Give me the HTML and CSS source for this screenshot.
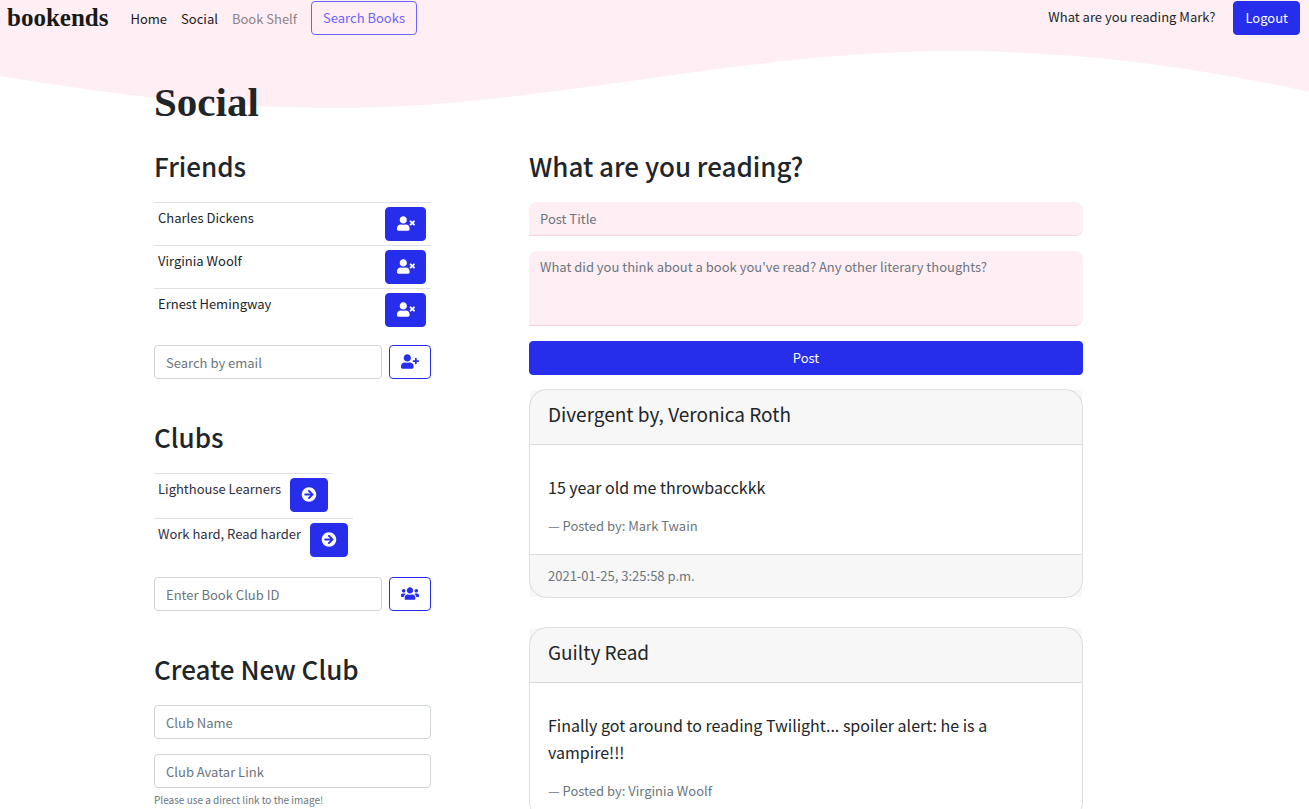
FILE: index.html
```html
<!DOCTYPE html>
<html lang="en">
<head>
<meta charset="utf-8">
<meta name="viewport" content="width=device-width, initial-scale=1">
<title>bookends</title>
<link rel="stylesheet" href="styles.css">
</head>
<body>
<svg class="sprites" aria-hidden="true">
  <symbol id="user-times" viewBox="0 0 640 512"><path d="M589.6 240l45.6-45.6c6.3-6.3 6.3-16.5 0-22.8l-22.8-22.8c-6.3-6.3-16.5-6.3-22.8 0L544 194.4l-45.6-45.6c-6.3-6.3-16.5-6.3-22.8 0l-22.8 22.8c-6.3 6.3-6.3 16.5 0 22.8l45.6 45.6-45.6 45.6c-6.3 6.3-6.3 16.5 0 22.8l22.8 22.8c6.3 6.3 16.5 6.3 22.8 0l45.6-45.6 45.6 45.6c6.3 6.3 16.5 6.3 22.8 0l22.8-22.8c6.3-6.3 6.3-16.5 0-22.8L589.6 240zM224 256c70.7 0 128-57.3 128-128S294.7 0 224 0 96 57.3 96 128s57.3 128 128 128zm89.6 32h-16.7c-22.2 10.2-46.9 16-72.9 16s-50.6-5.8-72.9-16h-16.7C60.2 288 0 348.2 0 422.4V464c0 26.5 21.5 48 48 48h352c26.5 0 48-21.5 48-48v-41.6c0-74.2-60.2-134.4-134.4-134.4z"/></symbol>
  <symbol id="user-plus" viewBox="0 0 640 512"><path d="M624 208h-64v-64c0-8.800-7.200-16-16-16h-32c-8.800 0-16 7.200-16 16v64h-64c-8.800 0-16 7.200-16 16v32c0 8.800 7.200 16 16 16h64v64c0 8.800 7.200 16 16 16h32c8.800 0 16-7.200 16-16v-64h64c8.800 0 16-7.200 16-16v-32c0-8.800-7.200-16-16-16zM224 256c70.7 0 128-57.3 128-128S294.7 0 224 0 96 57.3 96 128s57.3 128 128 128zm89.6 32h-16.7c-22.2 10.2-46.9 16-72.9 16s-50.6-5.8-72.9-16h-16.7C60.2 288 0 348.2 0 422.4V464c0 26.5 21.5 48 48 48h352c26.5 0 48-21.5 48-48v-41.6c0-74.2-60.2-134.4-134.4-134.4z"/></symbol>
  <symbol id="users" viewBox="0 0 640 512"><path d="M96 224c35.3 0 64-28.7 64-64s-28.7-64-64-64-64 28.7-64 64 28.7 64 64 64zm448 0c35.3 0 64-28.7 64-64s-28.7-64-64-64-64 28.7-64 64 28.7 64 64 64zm32 32h-64c-17.6 0-33.5 7.1-45.1 18.6 40.3 22.1 68.9 62 75.1 109.4h66c17.7 0 32-14.3 32-32v-32c0-35.3-28.7-64-64-64zm-256 0c61.9 0 112-50.1 112-112S381.9 32 320 32 208 82.1 208 144s50.1 112 112 112zm76.8 32h-8.3c-20.8 10-43.9 16-68.5 16s-47.6-6-68.5-16h-8.3C179.6 288 128 339.6 128 403.2V432c0 26.5 21.5 48 48 48h288c26.5 0 48-21.5 48-48v-28.800c0-63.6-51.6-115.2-115.2-115.2zm-223.7-13.4C161.5 263.1 145.6 256 128 256H64c-35.3 0-64 28.7-64 64v32c0 17.7 14.3 32 32 32h65.9c6.3-47.4 34.9-87.3 75.2-109.4z"/></symbol>
  <symbol id="arrow-circle" viewBox="0 0 512 512"><path d="M256 8c137 0 248 111 248 248S393 504 256 504 8 393 8 256 119 8 256 8zm-28.9 143.6l75.5 72.4H120c-13.3 0-24 10.7-24 24v16c0 13.3 10.7 24 24 24h182.6l-75.5 72.4c-9.7 9.3-9.9 24.8-.4 34.3l11 10.9c9.4 9.4 24.6 9.4 33.9 0L404.3 273c9.4-9.4 9.4-24.6 0-33.9L271.6 106.3c-9.4-9.4-24.6-9.4-33.9 0l-11 10.900c-9.5 9.6-9.3 25.1.4 34.4z"/></symbol>
</svg>

<svg class="wave" viewBox="0 0 1309 108" preserveAspectRatio="none" aria-hidden="true">
  <path d="M0 0H1309V92C1190 65 1070 51 950 51C740 51 540 108 335 108C220 108 115 95 0 76Z"/>
</svg>

<header class="navbar">
  <a class="brand" href="#">bookends</a>
  <nav class="nav-links">
    <a class="nav-link" href="#">Home</a>
    <a class="nav-link" href="#">Social</a>
    <a class="nav-link muted" href="#">Book Shelf</a>
    <a class="btn btn-search" href="#">Search Books</a>
  </nav>
  <span class="greeting">What are you reading Mark?</span>
  <button class="btn btn-solid" type="button">Logout</button>
</header>

<main class="container">
  <h1 class="page-title">Social</h1>
  <div class="columns">
    <div class="sidebar">
      <section class="section">
        <h2 class="heading">Friends</h2>
        <table class="list list-full">
          <tbody>
            <tr><td>Charles Dickens</td><td class="action"><button class="btn btn-solid btn-icon" type="button" aria-label="Remove Charles Dickens"><svg class="icon"><use href="#user-times"/></svg></button></td></tr>
            <tr><td>Virginia Woolf</td><td class="action"><button class="btn btn-solid btn-icon" type="button" aria-label="Remove Virginia Woolf"><svg class="icon"><use href="#user-times"/></svg></button></td></tr>
            <tr><td>Ernest Hemingway</td><td class="action"><button class="btn btn-solid btn-icon" type="button" aria-label="Remove Ernest Hemingway"><svg class="icon"><use href="#user-times"/></svg></button></td></tr>
          </tbody>
        </table>
        <form class="inline-form">
          <input class="field" type="email" placeholder="Search by email" aria-label="Search by email">
          <button class="btn btn-outline btn-icon" type="button" aria-label="Add friend"><svg class="icon"><use href="#user-plus"/></svg></button>
        </form>
      </section>

      <section class="section">
        <h2 class="heading">Clubs</h2>
        <div class="clubs">
          <table class="list"><tbody><tr><td><a class="club-link" href="#">Lighthouse Learners</a></td><td class="action"><button class="btn btn-solid btn-go" type="button" aria-label="Open Lighthouse Learners"><svg class="icon"><use href="#arrow-circle"/></svg></button></td></tr></tbody></table>
          <table class="list"><tbody><tr><td><a class="club-link" href="#">Work hard, Read harder</a></td><td class="action"><button class="btn btn-solid btn-go" type="button" aria-label="Open Work hard, Read harder"><svg class="icon"><use href="#arrow-circle"/></svg></button></td></tr></tbody></table>
        </div>
        <form class="inline-form">
          <input class="field" type="text" placeholder="Enter Book Club ID" aria-label="Enter Book Club ID">
          <button class="btn btn-outline btn-icon" type="button" aria-label="Join club"><svg class="icon"><use href="#users"/></svg></button>
        </form>
      </section>

      <section class="section">
        <h2 class="heading">Create New Club</h2>
        <form class="stack">
          <input class="field" type="text" placeholder="Club Name" aria-label="Club Name">
          <div>
            <input class="field" type="url" placeholder="Club Avatar Link" aria-label="Club Avatar Link" aria-describedby="avatar-help">
            <small class="help" id="avatar-help">Please use a direct link to the image!</small>
          </div>
        </form>
      </section>
    </div>

    <div class="feed">
      <h2 class="heading">What are you reading?</h2>
      <form class="stack post-form">
        <input class="field field-pink" type="text" placeholder="Post Title" aria-label="Post Title">
        <textarea class="field field-pink area" placeholder="What did you think about a book you've read? Any other literary thoughts?" aria-label="Post content"></textarea>
        <button class="btn btn-solid" type="button">Post</button>
      </form>
      <article class="card">
        <h3 class="card-header">Divergent by, Veronica Roth</h3>
        <blockquote class="card-body">
          <p class="quote">15 year old me throwbacckkk</p>
          <footer class="author">— Posted by: Mark Twain</footer>
        </blockquote>
        <div class="card-footer">2021-01-25, 3:25:58 p.m.</div>
      </article>
      <article class="card">
        <h3 class="card-header">Guilty Read</h3>
        <blockquote class="card-body">
          <p class="quote">Finally got around to reading Twilight... spoiler alert: he is a vampire!!!</p>
          <footer class="author">— Posted by: Virginia Woolf</footer>
        </blockquote>
      </article>
    </div>
  </div>
</main>
</body>
</html>
```
FILE: styles.css
```css
:root {
  --blue: #262eeb;
  --pink: #ffeff4;
  --ink: #212529;
  --grey: #6c757d;
  --sans: "Noto Sans CJK JP", "Noto Sans", sans-serif;
}

* {
  box-sizing: border-box;
}

body {
  position: relative;
  margin: 0;
  background: #fff;
  color: var(--ink);
  font: 13px/21px var(--sans);
}

h1, h2, h3, p, blockquote {
  margin: 0;
}

.sprites {
  position: absolute;
  width: 0;
  height: 0;
}

.wave {
  position: absolute;
  top: 0;
  left: 0;
  z-index: -1;
  width: 100%;
  height: 108px;
  fill: var(--pink);
}

.navbar {
  display: flex;
  align-items: center;
  padding: 1px 9px 1px 7px;
}

.brand {
  margin-right: 22px;
  color: #191919;
  font: bold 25px/34px "Liberation Serif", serif;
  text-decoration: none;
}

.nav-links {
  display: flex;
  align-items: center;
  gap: 14px;
}

.nav-link {
  color: #191919;
  text-decoration: none;
}

.muted {
  color: #8c8388;
}

.greeting {
  margin: 0 18px 4px auto;
}

.btn {
  display: block;
  height: 34px;
  padding: 0 11px;
  border: 1px solid var(--blue);
  border-radius: 4px;
  font: 13px/32px var(--sans);
  text-align: center;
  text-decoration: none;
  cursor: pointer;
}

.btn-solid {
  background: var(--blue);
  color: #fff;
}

.btn-outline {
  background: #fff;
  color: var(--blue);
}

.btn-search {
  border-color: #6c63ff;
  color: #6c63ff;
}

.btn-icon, .btn-go {
  display: flex;
  align-items: center;
  justify-content: center;
  padding: 0 0 2px;
}

.btn-icon {
  width: 41px;
}

.btn-go {
  width: 38px;
}

.icon {
  width: 18px;
  height: 15px;
  fill: currentColor;
}

.container {
  max-width: 1001px;
  margin: 0 auto;
  padding: 42px 72px 30px 0;
}

.page-title {
  font: bold 41px/48px "Liberation Serif", serif;
}

.columns {
  display: grid;
  grid-template-columns: minmax(0, 1fr) minmax(0, 2fr);
  gap: 98px;
  padding-top: 22px;
}

.heading {
  margin-bottom: 18px;
  font-size: 26px;
  font-weight: 500;
  line-height: 36px;
}

.section {
  margin-bottom: 40px;
}

.list {
  border-collapse: collapse;
}

.list-full {
  width: 100%;
}

.list td {
  padding: 4px;
  border-top: 1px solid #dee2e6;
  vertical-align: top;
}

.list .action {
  width: 46px;
  padding-left: 5px;
  padding-right: 5px;
}

.clubs {
  display: grid;
  justify-items: start;
  gap: 2px;
  padding-bottom: 2px;
}

.club-link {
  color: #2f2e41;
  text-decoration: none;
}

.inline-form {
  display: flex;
  gap: 7px;
  margin-top: 14px;
}

.inline-form .btn {
  flex: none;
  width: 42px;
}

.field {
  display: block;
  width: 100%;
  height: 34px;
  padding: 0 11px;
  border: 1px solid #ced4da;
  border-radius: 4px;
  background: #fff;
  color: var(--ink);
  font: 13px/21px var(--sans);
}

.field::placeholder {
  color: var(--grey);
  opacity: 1;
}

.stack {
  display: grid;
  gap: 15px;
}

.help {
  display: block;
  margin-top: 3px;
  color: var(--grey);
  font-size: 10px;
  line-height: 18px;
}

.field-pink {
  border-width: 0 0 1px;
  border-color: #fbd3e0;
  border-radius: 8px 8px 8px 0;
  background: var(--pink);
}

.area {
  height: 75px;
  padding-top: 5px;
  resize: none;
}

.post-form {
  margin-bottom: 14px;
}

.card {
  margin-bottom: 29px;
  border: 1px solid rgba(0, 0, 0, 0.125);
  border-radius: 18px;
}

.card-header {
  padding: 11px 18px 17px;
  border-bottom: 1px solid rgba(0, 0, 0, 0.125);
  border-radius: 3px 3px 0 0;
  background: rgba(0, 0, 0, 0.03);
  font-size: 19px;
  font-weight: 400;
  line-height: 26px;
}

.card-body {
  padding: 29px 18px 18px;
}

.quote {
  margin-bottom: 14px;
  font-size: 16px;
  line-height: 27px;
}

.author {
  color: var(--grey);
}

.card-footer {
  padding: 10px 18px 11px;
  border-top: 1px solid rgba(0, 0, 0, 0.125);
  border-radius: 0 0 3px 3px;
  background: rgba(0, 0, 0, 0.03);
  color: var(--grey);
}
```
